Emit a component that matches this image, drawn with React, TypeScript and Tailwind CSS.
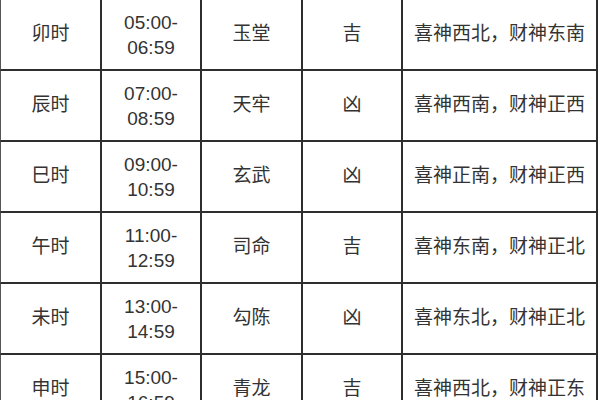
const rows = [
  { name: "卯时", from: "05:00-", to: "06:59", god: "玉堂", luck: "吉", dir: "喜神西北，财神东南" },
  { name: "辰时", from: "07:00-", to: "08:59", god: "天牢", luck: "凶", dir: "喜神西南，财神正西" },
  { name: "巳时", from: "09:00-", to: "10:59", god: "玄武", luck: "凶", dir: "喜神正南，财神正西" },
  { name: "午时", from: "11:00-", to: "12:59", god: "司命", luck: "吉", dir: "喜神东南，财神正北" },
  { name: "未时", from: "13:00-", to: "14:59", god: "勾陈", luck: "凶", dir: "喜神东北，财神正北" },
  { name: "申时", from: "15:00-", to: "16:59", god: "青龙", luck: "吉", dir: "喜神西北，财神正东" },
];

const cell =
  "flex h-[71px] items-center justify-center border-r-2 border-b-2 border-[#2e2e2e] text-center";

export default function App() {
  return (
    <div
      className="h-[400px] w-[600px] overflow-hidden bg-white text-[19px] text-[#333]"
      style={{ fontFamily: '"Liberation Sans", "Noto Sans CJK SC", sans-serif' }}
    >
      <div className="grid w-[598px] grid-cols-[102px_100px_101px_100px_195px]">
        {rows.map((r) => (
          <div key={r.name} className="contents">
            <div className={`${cell} border-l border-l-[#555]`}>{r.name}</div>
            <div className={`${cell} flex-col leading-[25px]`}>
              <span>{r.from}</span>
              <span>{r.to}</span>
            </div>
            <div className={cell}>{r.god}</div>
            <div className={cell}>{r.luck}</div>
            <div className={cell}>{r.dir}</div>
          </div>
        ))}
      </div>
    </div>
  );
}
